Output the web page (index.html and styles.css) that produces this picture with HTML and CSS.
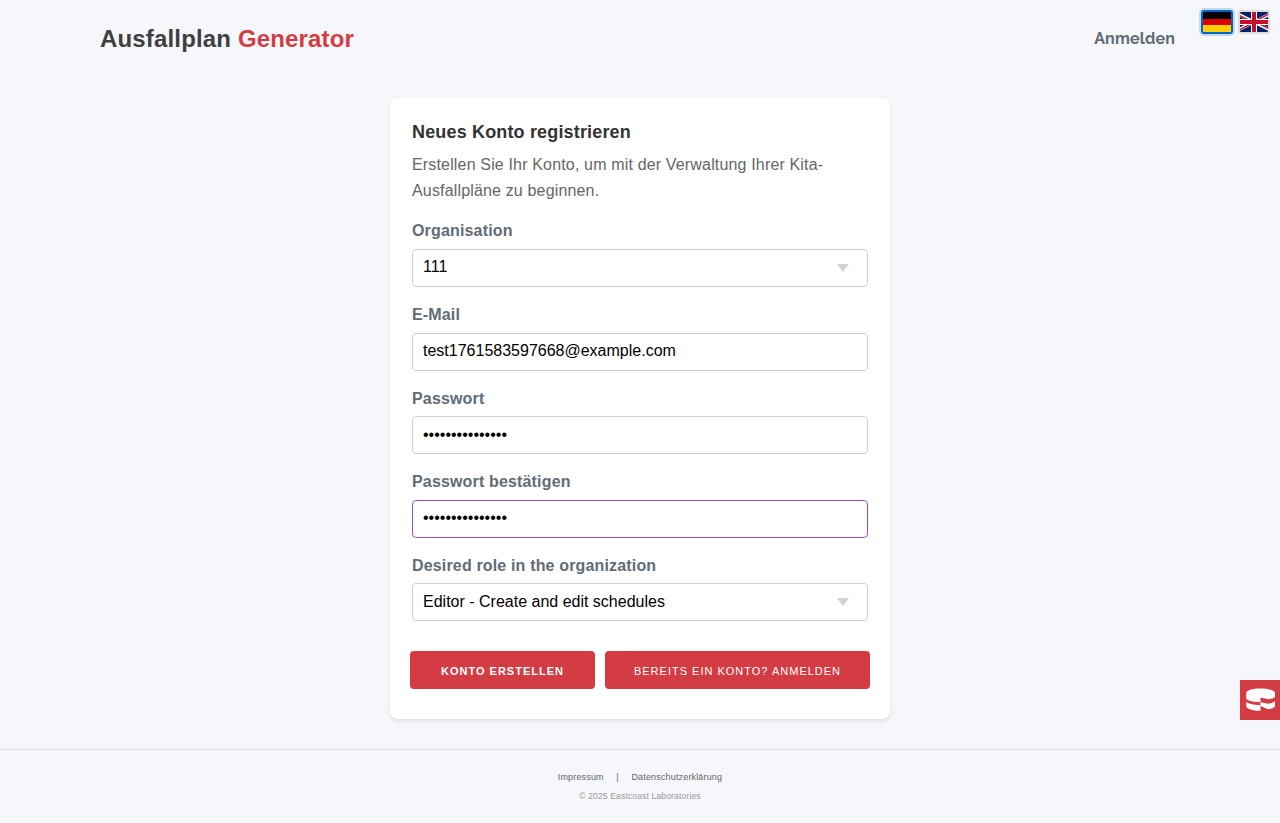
FILE: index.html
```html
<!DOCTYPE html>
<html lang="de">
<head>
<meta charset="utf-8">
<title>Ausfallplan Generator</title>
<link rel="stylesheet" href="styles.css">
</head>
<body>
<nav class="top-nav">
  <a class="brand">Ausfallplan <span>Generator</span></a>
  <a class="login-link">Anmelden</a>
</nav>
<div class="languages">
  <a class="flag active" aria-label="Deutsch">
    <svg viewBox="0 0 28 20"><path fill="#000" d="M0 0h28v7H0z"/><path fill="#d00" d="M0 7h28v6H0z"/><path fill="#ffce00" d="M0 13h28v7H0z"/></svg>
  </a>
  <a class="flag" aria-label="English">
    <svg viewBox="2 0 56 40"><path fill="#012169" d="M0 0h60v40H0z"/><path stroke="#fff" stroke-width="6" d="M-10 0l80 40M70 0L-10 40"/><path stroke="#c8102e" stroke-width="3" d="M-10 1.500L30 21.500M70 38.500L30 18.500M68 0L30 19M-8 40l38-19"/><path stroke="#fff" stroke-width="12" d="M30 0v40M0 20h60"/><path stroke="#c8102e" stroke-width="8" d="M30 0v40M0 20h60"/></svg>
  </a>
</div>
<main class="card">
  <form>
    <h1 class="title">Neues Konto registrieren</h1>
    <p class="intro">Erstellen Sie Ihr Konto, um mit der Verwaltung Ihrer Kita-Ausfallpläne zu beginnen.</p>
    <label class="label" for="org">Organisation</label>
    <div class="select"><select class="field org" id="org"><option>111</option></select><svg class="arrow" viewBox="0 0 12 8"><path d="M0 0h12L6 8z"/></svg></div>
    <label class="label" for="email">E-Mail</label>
    <input class="field" id="email" type="email" value="test1761583597668@example.com">
    <label class="label" for="password">Passwort</label>
    <input class="field" id="password" type="password" value="passwort1234567">
    <label class="label" for="confirm">Passwort bestätigen</label>
    <input class="field focused" id="confirm" type="password" value="passwort1234567">
    <label class="label" for="role">Desired role in the organization</label>
    <div class="select"><select class="field" id="role"><option>Editor - Create and edit schedules</option></select><svg class="arrow" viewBox="0 0 12 8"><path d="M0 0h12L6 8z"/></svg></div>
    <div class="actions">
      <button class="button primary" type="button">Konto erstellen</button>
      <a class="button">Bereits ein Konto? Anmelden</a>
    </div>
  </form>
</main>
<footer class="footer">
  <div class="footer-links"><a>Impressum</a><span>|</span><a>Datenschutzerklärung</a></div>
  <div class="copyright">© 2025 Eastcoast Laboratories</div>
</footer>
<a class="debug-toggle" aria-label="Toolbar">
  <svg viewBox="0 0 40 40"><path fill="#fff" d="M6.300 13C6.300 10.300 12.500 8.500 20.500 8.500S35 10.300 35 13v3.500c0 1.400-3 2.200-6.500 2.700l-8-1.700v4.700c-8 0-14.200-1.700-14.200-4.200zM6.300 21.800c1.500 1.800 7 3.300 14.200 3.500v5.400c-8 0-14.200-1.800-14.200-4.500zM20.500 22.200l7.500 1.600c3.500-.5 6-1.500 7-2.800v5c0 1.600-3 2.800-7 3.200l-7.500-3.300z"/></svg>
</a>
</body>
</html>
```

FILE: styles.css
```css
* { box-sizing: border-box; }
body {
  margin: 0;
  min-height: 823px;
  background: #f5f7fb;
  color: #606c76;
  font: 16px/1.6 Helvetica, Arial, "Liberation Sans", sans-serif;
  letter-spacing: .01em;
}
.top-nav {
  display: flex;
  align-items: center;
  justify-content: space-between;
  height: 78px;
  padding: 0 105px 0 100px;
}
.brand { font-size: 24px; font-weight: 700; color: #404041; }
.brand span { color: #d33c43; }
.login-link { font-family: Raleway, Lato, sans-serif; font-weight: 700; }
.languages { position: absolute; top: 10px; right: 10px; display: flex; gap: 5px; }
.flag {
  width: 32px;
  height: 24px;
  border: 2px solid #ddd;
  border-radius: 3px;
  overflow: hidden;
}
.flag.active { border-color: #0066cc; box-shadow: 0 0 0 2px rgba(0, 102, 204, .2); }
.flag svg { display: block; width: 100%; height: 100%; }
.card {
  width: 500px;
  height: 621px;
  margin: 20px auto 30px;
  padding: 20px 22px;
  background: #fff;
  border-radius: 8px;
  box-shadow: 0 2px 4px rgba(0, 0, 0, .1);
}
.title { margin: 0 0 6.300px; color: #333; font-size: 18px; line-height: 28px; }
.intro { margin: 0 0 15px; color: #666; }
.label { display: block; margin-bottom: 5px; font-weight: 700; }
.field {
  display: block;
  appearance: none;
  width: 100%;
  height: 38px;
  margin: 0 0 15px;
  padding: 6px 10px 7px;
  border: 1px solid #d1d1d1;
  border-radius: 4px;
  outline: 0;
  background: transparent;
  color: #000;
  font: 16px Helvetica, Arial, "Liberation Sans", sans-serif;
  letter-spacing: normal;
}
.org { padding: 5px 10px 8px; }
.focused { border-color: #9b4dca; }
.select { position: relative; }
.arrow { position: absolute; right: 19px; top: 15px; width: 12px; height: 8px; fill: #d1d1d1; }
.actions { display: grid; grid-template-columns: 185px 265px; gap: 10px; margin: 29.700px -2px 0; }
.button {
  height: 38px;
  padding: 0;
  border: 0;
  border-radius: 4px;
  background: #d33c43;
  color: #fff;
  font: 400 11px/40px Helvetica, Arial, "Liberation Sans", sans-serif;
  letter-spacing: 1px;
  text-align: center;
  text-transform: uppercase;
}
.primary { font-weight: 700; }
.footer { height: 74px; padding-top: 20px; border-top: 1px solid #dcdfe4; text-align: center; }
.footer-links { display: flex; justify-content: center; gap: 12.600px; color: #666; font-size: 9px; line-height: 14px; }
.copyright { margin-top: 5px; color: #999; font-size: 8.5px; line-height: 14px; }
.debug-toggle { position: fixed; right: 0; top: 680px; width: 40px; height: 40px; background: #d33c43; }
.debug-toggle svg { display: block; }
```
